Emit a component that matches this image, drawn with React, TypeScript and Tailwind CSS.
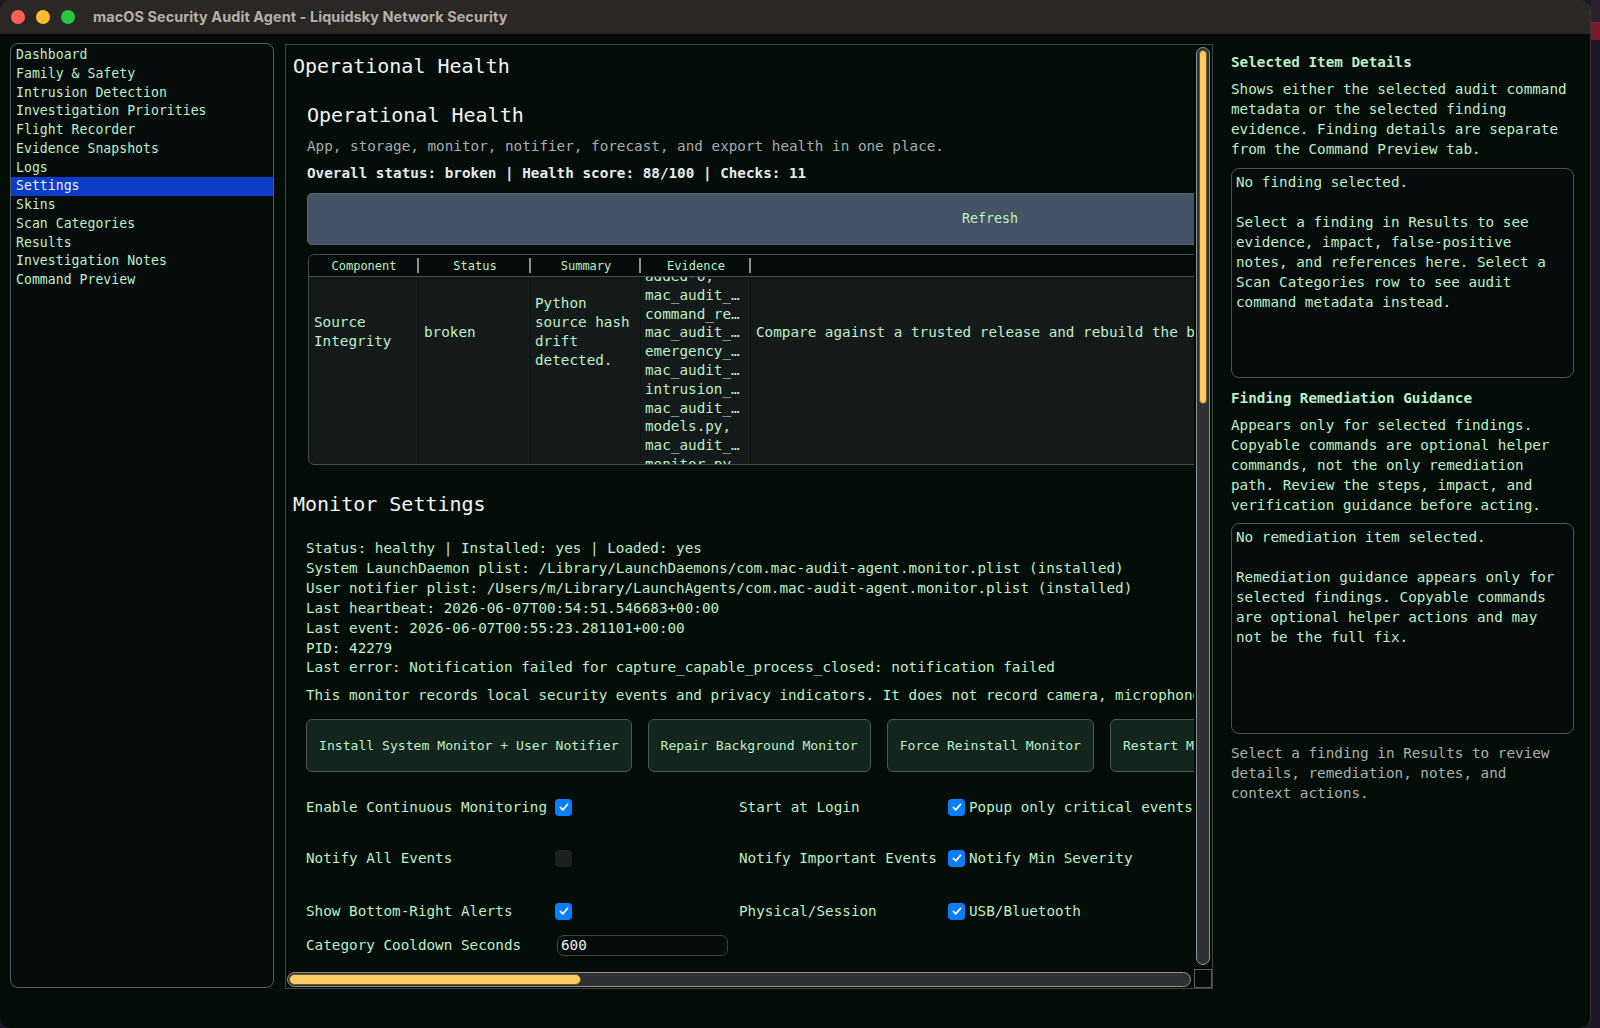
import React from 'react';

const nav = [
  'Dashboard',
  'Family & Safety',
  'Intrusion Detection',
  'Investigation Priorities',
  'Flight Recorder',
  'Evidence Snapshots',
  'Logs',
  'Settings',
  'Skins',
  'Scan Categories',
  'Results',
  'Investigation Notes',
  'Command Preview',
];

const statusLines = [
  'Status: healthy | Installed: yes | Loaded: yes',
  'System LaunchDaemon plist: /Library/LaunchDaemons/com.mac-audit-agent.monitor.plist (installed)',
  'User notifier plist: /Users/m/Library/LaunchAgents/com.mac-audit-agent.monitor.plist (installed)',
  'Last heartbeat: 2026-06-07T00:54:51.546683+00:00',
  'Last event: 2026-06-07T00:55:23.281101+00:00',
  'PID: 42279',
  'Last error: Notification failed for capture_capable_process_closed: notification failed',
];

const evidence = [
  'added-6,',
  'mac_audit_…',
  'command_re…',
  'mac_audit_…',
  'emergency_…',
  'mac_audit_…',
  'intrusion_…',
  'mac_audit_…',
  'models.py,',
  'mac_audit_…',
  'monitor.py,',
  'mac_audit_…',
];

const toggles = [
  { a: 'Enable Continuous Monitoring', on: true, b: 'Start at Login', c: 'Popup only critical events', gap: 'mt-[25px]' },
  { a: 'Notify All Events', on: false, b: 'Notify Important Events', c: 'Notify Min Severity', gap: 'mt-[31px]' },
  { a: 'Show Bottom-Right Alerts', on: true, b: 'Physical/Session', c: 'USB/Bluetooth', gap: 'mt-[33px]' },
];

const Check: React.FC<{ on: boolean }> = ({ on }) =>
  on ? (
    <span className="w-[17px] h-[17px] shrink-0 rounded-[4px] bg-[#0b7dfb] flex items-center justify-center">
      <svg viewBox="0 0 16 16" className="w-[12px] h-[12px]">
        <path d="M3.2 8.6 L6.4 11.8 L12.8 4.4" fill="none" stroke="#fff" strokeWidth="2.3" strokeLinecap="round" strokeLinejoin="round" />
      </svg>
    </span>
  ) : (
    <span className="w-[17px] h-[17px] shrink-0 rounded-[4px] bg-[#1b211f]" />
  );

const HeadCell: React.FC<{ w: string; label: string }> = ({ w, label }) => (
  <div className={`${w} h-full relative flex items-center justify-center shrink-0`}>
    {label}
    <span className="absolute right-0 top-[3px] bottom-[3px] w-[2px] bg-[#8a9290]" />
  </div>
);

export default function App() {
  return (
    <div className="w-[1600px] h-[1028px] flex bg-[#1c1626] overflow-hidden font-['DejaVu_Sans_Mono',monospace] text-[#bdefc8]">
      <div className="w-[1591px] h-full rounded-[10px] overflow-hidden flex flex-col bg-[#040d08] border-r border-[#3a3836]">
        {/* title bar */}
        <div className="h-[34px] shrink-0 bg-[#2b2725] flex items-center pl-[11px]">
          <span className="w-[14px] h-[14px] rounded-full bg-[#fe5f57]" />
          <span className="w-[14px] h-[14px] rounded-full bg-[#febc2e] ml-[11px]" />
          <span className="w-[14px] h-[14px] rounded-full bg-[#28c840] ml-[11px]" />
          <span className="ml-[18px] font-['Inter',sans-serif] font-bold text-[14.4px] text-[#b6afa9] tracking-[0.1px]">
            macOS Security Audit Agent - Liquidsky Network Security
          </span>
        </div>

        <div className="flex-1 flex min-h-0">
          {/* sidebar */}
          <nav className="ml-[10px] mt-[9px] w-[264px] h-[945px] shrink-0 rounded-[8px] border border-[#555c60] bg-[#070c0d] pt-[2px] text-[13.2px] leading-[18.75px]">
            {nav.map((item) => (
              <div
                key={item}
                className={`pl-[5px] whitespace-nowrap ${item === 'Settings' ? 'bg-[#0c3dc6] text-[#e8f0ff]' : ''}`}
              >
                {item}
              </div>
            ))}
          </nav>

          {/* main scroll panel */}
          <section className="ml-[11px] mt-[10px] w-[928px] h-[945px] shrink-0 border border-[#3b4543] grid grid-cols-[1fr_18px] grid-rows-[1fr_19px]">
            <div className="overflow-hidden">
              <div className="w-[2600px] pl-[7px] text-[14.3px]">
                <h1 className="mt-[7px] text-[20px] leading-[28px] text-[#f3f4f4]">Operational Health</h1>
                <div className="pl-[14px]">
                  <h2 className="mt-[21px] text-[20px] leading-[28px] text-[#f3f4f4]">Operational Health</h2>
                  <p className="mt-[7px] leading-[20px] text-[#a4acb1] whitespace-nowrap">
                    App, storage, monitor, notifier, forecast, and export health in one place.
                  </p>
                  <p className="mt-[7px] leading-[20px] font-bold text-[#e6eceb] whitespace-nowrap">
                    Overall status: broken | Health score: 88/100 | Checks: 11
                  </p>
                  <button className="mt-[10px] w-[1366px] h-[52px] rounded-[5px] bg-[#465367] border border-[#56627a] text-[13.3px] text-[#b9f0c6]">
                    Refresh
                  </button>

                  {/* health table */}
                  <div className="mt-[9px] ml-[1px] w-[2200px] h-[211px] rounded-[6px] border border-[#454e4e] bg-[#131a19] overflow-hidden flex flex-col">
                    <div className="h-[22px] shrink-0 bg-[#060b0b] border-b border-[#454e4e] flex text-[12px]">
                      <HeadCell w="w-[110px]" label="Component" />
                      <HeadCell w="w-[112px]" label="Status" />
                      <HeadCell w="w-[110px]" label="Summary" />
                      <HeadCell w="w-[110px]" label="Evidence" />
                      <div className="w-[1700px] h-full flex items-center justify-center">Recommended Action</div>
                    </div>
                    <div className="flex-1 flex min-h-0 leading-[18.8px]">
                      <div className="w-[110px] shrink-0 border-r border-[#0c1211] px-[5px]">
                        <div className="h-[110px] flex items-center">Source Integrity</div>
                      </div>
                      <div className="w-[112px] shrink-0 border-r border-[#0c1211] px-[5px]">
                        <div className="h-[110px] flex items-center">broken</div>
                      </div>
                      <div className="w-[110px] shrink-0 border-r border-[#0c1211] px-[4px]">
                        <div className="h-[110px] flex items-center">Python source hash drift detected.</div>
                      </div>
                      <div className="w-[110px] shrink-0 border-r border-[#0c1211] px-[4px] overflow-hidden">
                        <div className="-mt-[10px] whitespace-nowrap">
                          {evidence.map((e, i) => (
                            <div key={i}>{e}</div>
                          ))}
                        </div>
                      </div>
                      <div className="w-[1700px] shrink-0 px-[5px]">
                        <div className="h-[110px] flex items-center whitespace-nowrap">
                          Compare against a trusted release and rebuild the bundle before trusting results.
                        </div>
                      </div>
                    </div>
                  </div>
                </div>

                <h2 className="mt-[25px] text-[20px] leading-[28px] text-[#f3f4f4]">Monitor Settings</h2>
                <div className="pl-[13px]">
                  <div className="mt-[21px] leading-[19.9px] whitespace-nowrap">
                    {statusLines.map((l) => (
                      <div key={l}>{l}</div>
                    ))}
                  </div>
                  <p className="mt-[7px] leading-[20px] whitespace-nowrap">
                    This monitor records local security events and privacy indicators. It does not record camera, microphone, or screen content.
                  </p>
                  <div className="mt-[14px] flex gap-[16px] text-[13.1px]">
                    {['Install System Monitor + User Notifier', 'Repair Background Monitor', 'Force Reinstall Monitor', 'Restart Monitor', 'Uninstall Monitor'].map((b) => (
                      <button
                        key={b}
                        className="h-[53px] px-[12px] rounded-[6px] bg-[#13251d] border border-[#4c5853] whitespace-nowrap"
                      >
                        {b}
                      </button>
                    ))}
                  </div>

                  {toggles.map((t) => (
                    <div key={t.a} className={`${t.gap} h-[20px] flex items-center whitespace-nowrap`}>
                      <span className="w-[249px] shrink-0">{t.a}</span>
                      <span className="w-[184px] shrink-0 flex">
                        <Check on={t.on} />
                      </span>
                      <span className="w-[209px] shrink-0">{t.b}</span>
                      <Check on />
                      <span className="ml-[4px]">{t.c}</span>
                    </div>
                  ))}
                  <div className="mt-[14px] h-[21px] flex items-center whitespace-nowrap">
                    <span className="w-[251px] shrink-0">Category Cooldown Seconds</span>
                    <div className="w-[171px] h-[21px] rounded-[7px] border border-[#3b4545] bg-[#060c0c] pl-[3px] flex items-center text-[#eef2f0]">
                      600
                    </div>
                  </div>
                </div>
              </div>
            </div>

            {/* vertical scrollbar */}
            <div className="pl-[2px] pr-[2px] pt-[2px] pb-[4px]">
              <div className="h-full rounded-full bg-[#2f3235] border border-[#8e9194] p-[2px]">
                <div className="h-[354px] rounded-full bg-[#fdcb5f] border border-[#6b5a30]" />
              </div>
            </div>

            {/* horizontal scrollbar */}
            <div className="pl-[1px] pr-[3px] pt-[3px] pb-[1px]">
              <div className="h-full rounded-full bg-[#2f3235] border border-[#8e9194] p-[1px]">
                <div className="w-[292px] h-full rounded-full bg-[#fdcb5f] border border-[#6b5a30]" />
              </div>
            </div>
            <div className="border border-[#585e5e] bg-[#040a08]" />
          </section>

          {/* details pane */}
          <aside className="ml-[18px] mt-[18px] w-[343px] shrink-0 text-[14.3px] leading-[20px]">
            <h3 className="font-bold">Selected Item Details</h3>
            <p className="mt-[7px]">
              Shows either the selected audit command metadata or the selected finding evidence. Finding details are separate from the Command Preview tab.
            </p>
            <div className="mt-[9px] h-[210px] rounded-[8px] border border-[#4b5352] bg-[#060c0c] px-[4px] pt-[3px]">
              <p>No finding selected.</p>
              <p className="mt-[20px]">
                Select a finding in Results to see evidence, impact, false-positive notes, and references here. Select a Scan Categories row to see audit command metadata instead.
              </p>
            </div>
            <h3 className="mt-[10px] font-bold">Finding Remediation Guidance</h3>
            <p className="mt-[7px]">
              Appears only for selected findings. Copyable commands are optional helper commands, not the only remediation path. Review the steps, impact, and verification guidance before acting.
            </p>
            <div className="mt-[8px] h-[211px] rounded-[8px] border border-[#4b5352] bg-[#060c0c] px-[4px] pt-[3px]">
              <p>No remediation item selected.</p>
              <p className="mt-[20px]">
                Remediation guidance appears only for selected findings. Copyable commands are optional helper actions and may not be the full fix.
              </p>
            </div>
            <p className="mt-[9px] text-[#a7b2ad]">
              Select a finding in Results to review details, remediation, notes, and context actions.
            </p>
          </aside>
        </div>
      </div>
      <div className="flex-1 flex flex-col">
        <div className="h-[22px] bg-[#2a2030]" />
        <div className="h-[18px] bg-[#7d1a2a]" />
        <div className="flex-1 bg-[#1c1626]" />
      </div>
    </div>
  );
}
